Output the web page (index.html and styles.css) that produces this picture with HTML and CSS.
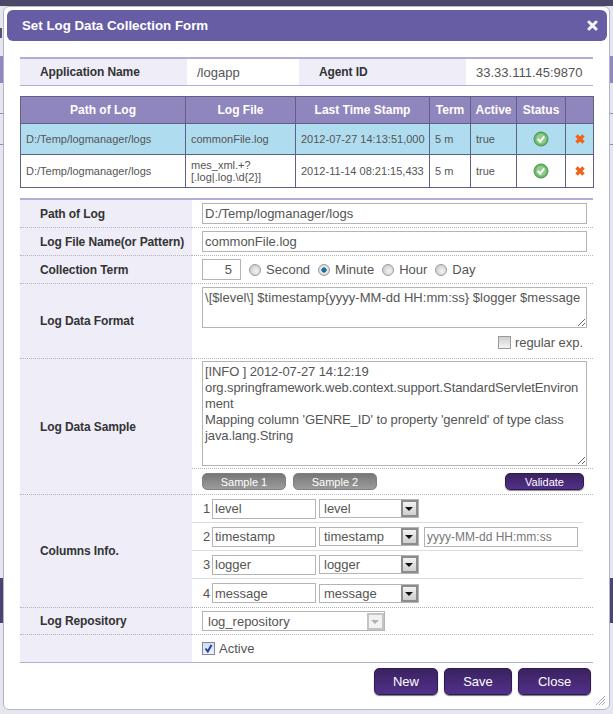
FILE: index.html
```html
<!DOCTYPE html>
<html>
<head>
  <title>Set Log Data Collection Form</title>
  <link rel="stylesheet" href="styles.css">
</head>
<body>

  <!-- dimmed page behind the dialog -->
  <div class="backdrop">
    <div class="bg-top"></div>
    <div class="bg-blot"></div>
    <div class="bg-row bg-active"></div>
    <div class="bg-row"></div>
    <div class="bg-row"></div>
    <div class="bg-plain"></div>
    <div class="bg-dark"></div>
  </div>

  <div class="dialog">
    <div class="dialog-title">
      <span>Set Log Data Collection Form</span>
      <svg class="close-icon" width="11" height="11" viewBox="0 0 11 11">
        <path d="M2 2 L9 9 M9 2 L2 9" stroke="#f4f3fa" stroke-width="3" stroke-linecap="round"/>
      </svg>
    </div>

    <div class="dialog-body">
      <table class="info-table">
        <tr>
          <th class="col-app">Application Name</th>
          <td class="col-appval">/logapp</td>
          <th class="col-agent">Agent ID</th>
          <td class="col-agentval">33.33.111.45:9870</td>
        </tr>
      </table>

      <table class="log-grid">
        <colgroup>
          <col class="g1"><col class="g2"><col class="g3"><col class="g4"><col class="g5"><col class="g6"><col class="g7">
        </colgroup>
        <tr class="grid-head">
          <th>Path of Log</th>
          <th>Log File</th>
          <th>Last Time Stamp</th>
          <th>Term</th>
          <th>Active</th>
          <th>Status</th>
          <th></th>
        </tr>
        <tr class="row-one selected">
          <td>D:/Temp/logmanager/logs</td>
          <td>commonFile.log</td>
          <td class="stamp">2012-07-27 14:13:51,000</td>
          <td>5 m</td>
          <td>true</td>
          <td class="center">
            <svg width="16" height="16" viewBox="0 0 16 16"><circle cx="8" cy="8" r="7" fill="#6cb56a" stroke="#4d9650"/><circle cx="8" cy="8" r="5" fill="#93cf8b"/><path d="M4.8 8 L7.2 10.5 L11.2 5.5" fill="none" stroke="#fff" stroke-width="2"/></svg>
          </td>
          <td class="center">
            <svg width="12" height="12" viewBox="0 0 12 12"><path d="M2.5 2.5 L9.5 9.5 M9.5 2.5 L2.5 9.5" stroke="#f0641a" stroke-width="3.4"/></svg>
          </td>
        </tr>
        <tr class="row-two">
          <td>D:/Temp/logmanager/logs</td>
          <td>mes_xml.+?<br>[.log|.log.\d{2}]</td>
          <td class="stamp">2012-11-14 08:21:15,433</td>
          <td>5 m</td>
          <td>true</td>
          <td class="center">
            <svg width="16" height="16" viewBox="0 0 16 16"><circle cx="8" cy="8" r="7" fill="#6cb56a" stroke="#4d9650"/><circle cx="8" cy="8" r="5" fill="#93cf8b"/><path d="M4.8 8 L7.2 10.5 L11.2 5.5" fill="none" stroke="#fff" stroke-width="2"/></svg>
          </td>
          <td class="center">
            <svg width="12" height="12" viewBox="0 0 12 12"><path d="M2.5 2.5 L9.5 9.5 M9.5 2.5 L2.5 9.5" stroke="#f0641a" stroke-width="3.4"/></svg>
          </td>
        </tr>
      </table>

      <table class="form-table">
        <tr class="h-path">
          <th>Path of Log</th>
          <td><input class="text-field wide" type="text" value="D:/Temp/logmanager/logs"></td>
        </tr>
        <tr class="h-path">
          <th>Log File Name(or Pattern)</th>
          <td><input class="text-field wide" type="text" value="commonFile.log"></td>
        </tr>
        <tr class="h-path">
          <th>Collection Term</th>
          <td>
            <div class="term-row">
              <input class="text-field term-input" type="text" value="5">
              <label class="radio-label"><span class="radio"></span>Second</label>
              <label class="radio-label"><span class="radio on"></span>Minute</label>
              <label class="radio-label"><span class="radio"></span>Hour</label>
              <label class="radio-label"><span class="radio"></span>Day</label>
            </div>
          </td>
        </tr>
        <tr class="h-format">
          <th>Log Data Format</th>
          <td class="top">
            <textarea class="text-area format-area">\[$level\] $timestamp{yyyy-MM-dd HH:mm:ss} $logger $message</textarea>
            <div class="regexp-row"><span class="check"></span>regular exp.</div>
          </td>
        </tr>
        <tr class="h-sample">
          <th>Log Data Sample</th>
          <td class="top flush">
            <div class="sample-box">
              <textarea class="text-area sample-area">[INFO ] 2012-07-27 14:12:19
org.springframework.web.context.support.StandardServletEnviron
ment
Mapping column 'GENRE_ID' to property 'genreId' of type class
java.lang.String</textarea>
            </div>
            <div class="sample-buttons">
              <button class="small-btn gray">Sample 1</button>
              <button class="small-btn gray">Sample 2</button>
              <button class="small-btn purple validate">Validate</button>
            </div>
          </td>
        </tr>
        <tr class="h-columns">
          <th>Columns Info.</th>
          <td class="flush">
            <div class="col-row">
              <span class="col-num">1</span>
              <input class="text-field col-name" type="text" value="level">
              <div class="select col-type"><span class="select-text">level</span><span class="select-btn"></span></div>
            </div>
            <div class="col-row">
              <span class="col-num">2</span>
              <input class="text-field col-name" type="text" value="timestamp">
              <div class="select col-type"><span class="select-text">timestamp</span><span class="select-btn"></span></div>
              <input class="text-field col-format" type="text" value="yyyy-MM-dd HH:mm:ss">
            </div>
            <div class="col-row">
              <span class="col-num">3</span>
              <input class="text-field col-name" type="text" value="logger">
              <div class="select col-type"><span class="select-text">logger</span><span class="select-btn"></span></div>
            </div>
            <div class="col-row last">
              <span class="col-num">4</span>
              <input class="text-field col-name" type="text" value="message">
              <div class="select col-type"><span class="select-text">message</span><span class="select-btn"></span></div>
            </div>
          </td>
        </tr>
        <tr class="h-repo">
          <th>Log Repository</th>
          <td>
            <div class="select repo disabled"><span class="select-text">log_repository</span><span class="select-btn"></span></div>
          </td>
        </tr>
        <tr class="h-active last">
          <th></th>
          <td><div class="active-row"><span class="check on"><svg width="11" height="11" viewBox="0 0 11 11"><path d="M2.5 5.5 L4.8 8.5 L8.5 2" fill="none" stroke="#24409a" stroke-width="2"/></svg></span>Active</div></td>
        </tr>
      </table>

      <div class="dialog-buttons">
        <button class="big-btn btn-new">New</button>
        <button class="big-btn btn-save">Save</button>
        <button class="big-btn btn-close">Close</button>
      </div>
    </div>

    <svg class="grip" width="11" height="11" viewBox="0 0 11 11">
      <path d="M1 10 L10 1 M4 10 L10 4 M7 10 L10 7" stroke="#a9a6c9" stroke-width="1"/>
    </svg>
  </div>

</body>
</html>
```

FILE: styles.css
```css
* {
  box-sizing: border-box;
}

html,
body {
  margin: 0;
  padding: 0;
  height: 714px;
  overflow: hidden;
}

body {
  position: relative;
  font-family: "Liberation Sans", Arial, sans-serif;
  font-size: 12px;
  color: #555;
  background-color: #e6e6ee;
}

/* page behind the dialog */
.bg-top {
  height: 6px;
  background-color: #4b4768;
}

.bg-blot {
  height: 50px;
  background: linear-gradient(#e6e6ee 22px, #55556a 22px, #55556a 32px, #e6e6ee 32px);
  background-size: 2px 100%;
  background-repeat: no-repeat;
}

.bg-row {
  height: 31px;
  border-bottom: 1px solid #8f8fa6;
}

.bg-active {
  height: 27px;
  background-color: #8f87bd;
  border-bottom: 0;
}

.bg-plain {
  height: 433px;
}

.bg-dark {
  height: 45px;
  background-color: #4a4470;
}

/* dialog */
.dialog {
  position: absolute;
  left: 3px;
  top: 6px;
  width: 607px;
  height: 704px;
  background-color: #fff;
  border: 1px solid #b5b1d4;
  border-radius: 6px;
}

.dialog-title {
  display: flex;
  align-items: center;
  justify-content: space-between;
  height: 31px;
  margin: 3px 2px 0 3px;
  padding: 0 9px 0 15px;
  background-color: #675da5;
  border-radius: 6px;
  color: #fff;
  font-size: 13.3px;
  font-weight: bold;
}

.dialog-body {
  margin: 16px 0 0 16px;
  width: 573px;
}

/* top info */
.info-table {
  width: 573px;
  height: 29px;
  table-layout: fixed;
  border-collapse: separate;
  border-spacing: 0;
}

.info-table th,
.info-table td {
  border-top: 2px solid #b3aed8;
  border-bottom: 1px solid #b3aed8;
  padding: 0;
  font-size: 12px;
}

.info-table th {
  background-color: #eeedf8;
  color: #333;
  text-align: left;
  letter-spacing: -0.1px;
}

.info-table td {
  font-size: 13px;
}

.col-app {
  width: 167px;
  padding-left: 20px !important;
}

.col-appval {
  width: 112px;
  padding-left: 10px !important;
}

.col-agent {
  width: 167px;
  padding-left: 20px !important;
}

.col-agentval {
  width: 127px;
  padding-left: 10px !important;
}

/* log grid */
.log-grid {
  width: 573px;
  margin-top: 10px;
  table-layout: fixed;
  border-collapse: collapse;
  font-size: 11px;
}

.log-grid th,
.log-grid td {
  border: 1px solid #5f6085;
  padding: 0 5px;
}

.log-grid td.stamp {
  padding-right: 0;
  white-space: nowrap;
}

.g1 { width: 165px; }
.g2 { width: 110px; }
.g3 { width: 134px; }
.g4 { width: 41px; }
.g5 { width: 46px; }
.g6 { width: 49px; }
.g7 { width: 28px; }

.grid-head {
  height: 27px;
  background-color: #8f86bd;
  color: #fff;
  font-size: 12px;
}

.log-grid .grid-head th {
  padding: 0;
}

.row-one {
  height: 31px;
}

.row-two {
  height: 33px;
}

.selected {
  background-color: #b0dcf0;
}

.center {
  text-align: center;
}

.center svg {
  display: block;
  margin: 0 auto;
}

/* form */
.form-table {
  width: 573px;
  margin-top: 10px;
  table-layout: fixed;
  border-collapse: separate;
  border-spacing: 0;
  border-top: 2px solid #b3aed8;
  border-bottom: 1px solid #b3aed8;
}

.form-table th,
.form-table td {
  border-bottom: 1px dotted #b4b4bc;
  padding: 0 6px 0 10px;
}

.form-table tr.last th,
.form-table tr.last td {
  border-bottom: 0;
}

.form-table th {
  width: 172px;
  padding: 0 0 0 20px;
  background-color: #eeedf8;
  color: #333;
  text-align: left;
  font-size: 12px;
  letter-spacing: -0.1px;
  white-space: nowrap;
}

.form-table td.top {
  vertical-align: top;
}

.form-table td.flush {
  padding: 0;
}

.h-path {
  height: 28px;
}

.h-format {
  height: 75px;
}

.h-sample {
  height: 136px;
}

.h-columns {
  height: 112px;
}

.h-repo {
  height: 27px;
}

.h-active {
  height: 27px;
}

.text-field {
  height: 21px;
  margin: 0;
  padding: 0 2px;
  border: 1px solid #b4b4b4;
  background-color: #fff;
  font-family: "Liberation Sans", Arial, sans-serif;
  font-size: 13px;
  color: #555;
  display: block;
}

.wide {
  width: 385px;
}

.term-row {
  display: flex;
  align-items: center;
}

.term-input {
  width: 39px;
  margin-right: 8px;
  padding-right: 8px;
  text-align: right;
}

.radio-label {
  display: flex;
  align-items: center;
  margin-right: 8px;
  font-size: 13px;
  color: #555;
}

.radio {
  width: 12px;
  height: 12px;
  margin-right: 5px;
  border: 1px solid #9c9c9c;
  border-radius: 50%;
  background: radial-gradient(circle at 60% 60%, #f4f4f4 0, #cfcfcf 70%);
}

.radio.on {
  background: radial-gradient(circle, #1b6f9c 0, #1b6f9c 34%, #e8e8e8 40%, #cfcfcf 100%);
}

.text-area {
  display: block;
  width: 385px;
  margin: 0;
  padding: 2px;
  border: 1px solid #b4b4b4;
  font-family: "Liberation Sans", Arial, sans-serif;
  font-size: 13px;
  line-height: 16px;
  color: #555;
  white-space: pre;
  overflow: hidden;
  resize: vertical;
}

.format-area {
  height: 41px;
  margin-top: 3px;
  letter-spacing: 0.03px;
}

.regexp-row {
  display: flex;
  align-items: center;
  justify-content: flex-end;
  margin-top: 7px;
  padding-right: 4px;
  font-size: 13px;
  letter-spacing: -0.05px;
  color: #555;
}

.check {
  display: block;
  width: 13px;
  height: 13px;
  margin-right: 4px;
  border: 1px solid #9a9a9a;
  background: linear-gradient(#cfcfcf, #f4f4f4);
}

.check.on {
  background: linear-gradient(#cfdcf4, #eef3fb);
  border-color: #8088a8;
}

.check svg {
  display: block;
}

.sample-box {
  padding: 2px 6px 3px 10px;
  height: 110px;
  border-bottom: 1px dotted #b4b4bc;
}

.sample-area {
  height: 105px;
  letter-spacing: -0.1px;
}

.sample-buttons {
  display: flex;
  gap: 7px;
  padding: 4px 9px 0 10px;
}

.small-btn {
  width: 84px;
  height: 17px;
  padding: 0;
  border-radius: 5px;
  font-family: "Liberation Sans", Arial, sans-serif;
  font-size: 11px;
  color: #fff;
}

.gray {
  background: linear-gradient(#777, #9c9c9c);
  border: 1px solid #808080;
}

.purple {
  background: linear-gradient(#3a2260, #52308a);
  border: 1px solid #2d1c4d;
  box-shadow: 0 1px 1px #888;
}

.validate {
  width: 79px;
  margin-left: auto;
}

/* columns */
.col-row {
  display: flex;
  align-items: center;
  width: 391px;
  height: 28px;
  padding-left: 11px;
  border-bottom: 1px solid #dcdce0;
}

.col-row.last {
  border-bottom: 0;
}

.col-num {
  width: 9px;
  font-size: 13px;
  color: #555;
}

.col-name {
  width: 104px;
  height: 20px;
}

.select {
  display: flex;
  align-items: center;
  justify-content: space-between;
  height: 19px;
  border: 1px solid #b4b4b4;
  background-color: #fff;
  font-size: 13px;
  color: #555;
}

.select-text {
  padding-left: 4px;
}

.select-btn {
  position: relative;
  width: 17px;
  height: 17px;
  border: 2px solid #8c8c8c;
  background: linear-gradient(#f2f2f2, #cfcfcf);
}

.select-btn::after {
  content: "";
  position: absolute;
  left: 2px;
  top: 5px;
  border-left: 4px solid transparent;
  border-right: 4px solid transparent;
  border-top: 4px solid #111;
}

.col-type {
  width: 100px;
  margin-left: 3px;
}

.col-format {
  width: 154px;
  height: 20px;
  margin-left: 5px;
  font-size: 12px;
  color: #777;
}

.repo {
  width: 183px;
  height: 20px;
  padding-left: 1px;
}

.repo .select-btn {
  border-color: #c4c4c4;
  background: #f2f2f2;
}

.repo .select-btn::after {
  border-top-color: #b0b0b0;
}

.active-row {
  display: flex;
  align-items: center;
  font-size: 13px;
  color: #555;
}

/* footer buttons */
.dialog-buttons {
  display: flex;
  justify-content: flex-end;
  gap: 6px;
  margin-top: 5px;
  padding-right: 2px;
}

.big-btn {
  height: 27px;
  padding: 0;
  border: 1px solid #2d1c4d;
  border-radius: 5px;
  background: linear-gradient(#3a2260, #52308a);
  box-shadow: 0 1px 1px #777;
  font-family: "Liberation Sans", Arial, sans-serif;
  font-size: 13px;
  color: #fff;
}

.btn-new {
  width: 64px;
}

.btn-save {
  width: 68px;
}

.btn-close {
  width: 73px;
}

.grip {
  position: absolute;
  right: 3px;
  bottom: 3px;
}
```
